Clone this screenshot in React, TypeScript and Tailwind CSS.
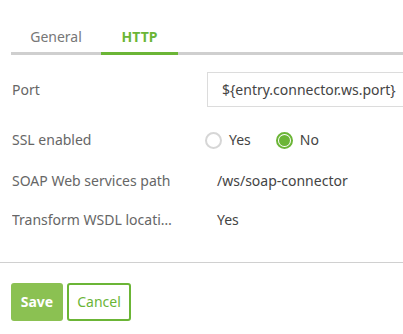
import { useState } from 'react';

function Radio({ checked, label, onClick }: { checked: boolean; label: string; onClick: () => void }) {
  return (
    <button type="button" onClick={onClick} className="flex items-center gap-[7px]">
      <span
        className={`w-[17px] h-[17px] rounded-full border-2 flex items-center justify-center ${
          checked ? 'border-[#6bb536]' : 'border-[#d6d6d6]'
        }`}
      >
        {checked && <span className="w-[11px] h-[11px] rounded-full bg-[#6bb536]" />}
      </span>
      <span className="text-[#444]">{label}</span>
    </button>
  );
}

export default function App() {
  const [tab, setTab] = useState<'general' | 'http'>('http');
  const [ssl, setSsl] = useState(false);

  return (
    <div className="w-[403px] h-[334px] bg-white overflow-hidden text-sm text-[#555]" style={{ fontFamily: '"Noto Sans", sans-serif' }}>
      {/* tabs */}
      <div className="pt-[22px] pl-[11px]">
        <div className="flex border-b-[3px] border-[#cfcfcf]">
          <button
            onClick={() => setTab('general')}
            className={`w-[90px] h-[33px] -mb-[3px] border-b-[3px] ${tab === 'general' ? 'border-[#6bb536] text-[#6bb536] font-bold' : 'border-transparent text-[#777]'}`}
          >
            General
          </button>
          <button
            onClick={() => setTab('http')}
            className={`w-[77px] h-[33px] -mb-[3px] border-b-[3px] ${tab === 'http' ? 'border-[#6bb536] text-[#6bb536] font-bold' : 'border-transparent text-[#777]'}`}
          >
            HTTP
          </button>
        </div>
      </div>

      {/* form */}
      <div className="pl-[12px] flex flex-col">
        <div className="mt-[17px] h-[35px] flex items-center">
          <span className="w-[195px] text-[#666]">Port</span>
          <div className="flex-1 h-full border border-[#dcdcdc] border-r-0 pl-[14px] flex items-center text-[#444] whitespace-nowrap">
            {'${entry.connector.ws.port}'}
          </div>
        </div>
        <div className="mt-[21px] h-[24px] flex items-center">
          <span className="w-[193px] text-[#666]">SSL enabled</span>
          <div className="flex items-center gap-[25px]">
            <Radio checked={ssl} label="Yes" onClick={() => setSsl(true)} />
            <Radio checked={!ssl} label="No" onClick={() => setSsl(false)} />
          </div>
        </div>
        <div className="mt-[17px] h-[24px] flex items-center">
          <span className="w-[205px] text-[#666]">SOAP Web services path</span>
          <span className="text-[#444]">/ws/soap-connector</span>
        </div>
        <div className="mt-[15px] h-[24px] flex items-center">
          <div className="w-[205px]">
            <span className="block w-[160px] text-[#666] truncate">Transform WSDL location</span>
          </div>
          <span className="text-[#444]">Yes</span>
        </div>
      </div>

      <div className="mt-[30px] border-t border-[#d0d0d0]" />

      <div className="pl-[11px] pt-[20px] flex gap-[4px]">
        <button className="w-[52px] h-[38px] rounded-[3px] bg-[#8bc152] text-white font-bold">Save</button>
        <button className="w-[64px] h-[38px] rounded-[3px] border-2 border-[#6bb536] text-[#6bb536]">Cancel</button>
      </div>
    </div>
  );
}
